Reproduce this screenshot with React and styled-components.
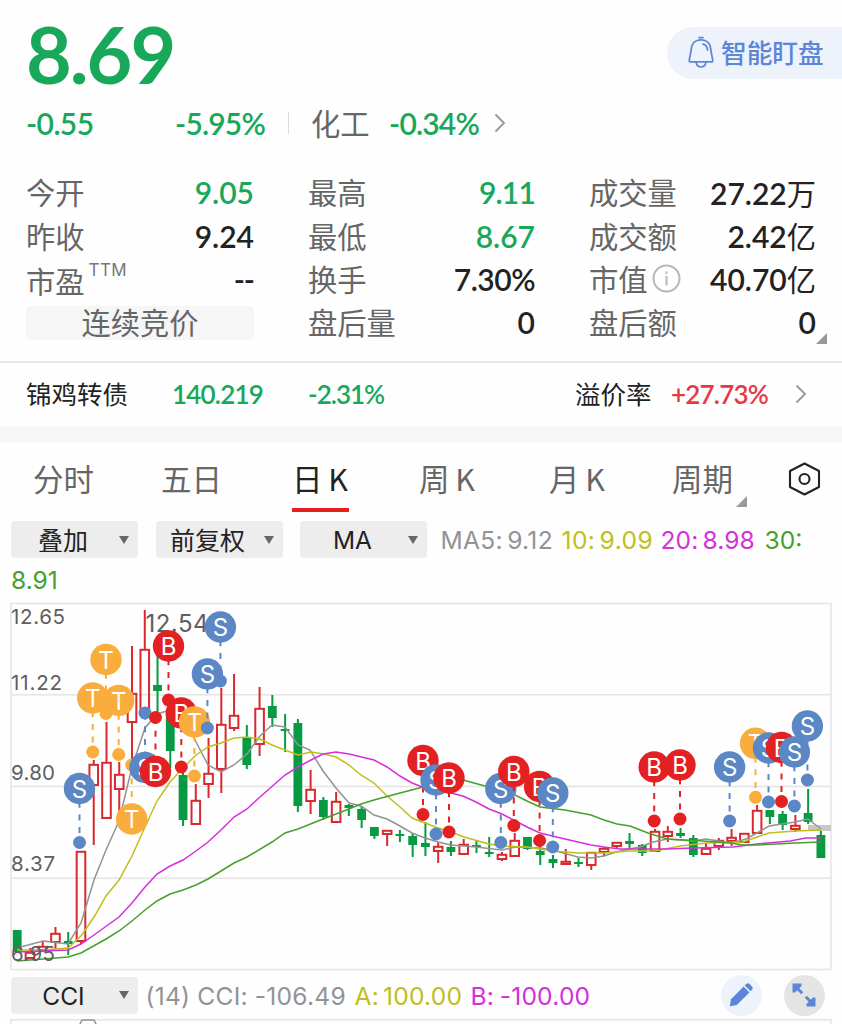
import React from 'react';
import styled, { createGlobalStyle } from 'styled-components';

const GREEN = '#18a85a';
const RED = '#e63946';
const YELLOW = '#bfbf1c';
const PINK = '#d62fdc';
const LEAF = '#45a02e';
const GRAY = '#929396';

const CJK = `"Noto Sans CJK SC", sans-serif`;
const DIN = `Lato, "Noto Sans CJK SC", sans-serif`;
const UI = `Inter, "Noto Sans CJK SC", sans-serif`;

const GlobalStyle = createGlobalStyle`
    * {
        box-sizing:border-box;
    }
    body {
        margin:0;
        background:#fefefe;
        overflow:hidden;
    }
`
const Page = styled.div`
    width:842px;
    height:1024px;
    overflow:hidden;
    background:#fefefe;
    color:#222;
    font-family:${CJK};
    white-space:nowrap;
`

/* ---------- quote header ---------- */
const Header = styled.header`
    display:flex;
    justify-content:space-between;
    height:102px;
    padding:7px 0 0 26px;
`
const Price = styled.div`
    font:700 79px/94px ${DIN};
    letter-spacing:-2px;
    color:${GREEN};
`
const WatchBtn = styled.button`
    display:flex;
    align-items:center;
    gap:7px;
    width:175px;
    height:52px;
    margin-top:20px;
    padding:0 0 2px 21px;
    border:0;
    border-radius:26px 0 0 26px;
    background:#edf2fb;
    color:#5b86d8;
    font:500 25.7px/50px ${CJK};
`
const Num = styled.span`
    font-family:${DIN};
    font-weight:600;
    font-size:${p => p.$size || 30}px;
    letter-spacing:${p => p.$ls || 0}px;
    color:${p => p.$color || '#222'};
    width:${p => p.$w ? p.$w + 'px' : 'auto'};
`
const Unit = styled.span`
    font-family:${CJK};
    font-weight:400;
    font-size:29.3px;
    letter-spacing:0;
`
const ChangeRow = styled.div`
    display:flex;
    align-items:center;
    height:42px;
    padding-left:26px;
`
const Divider = styled.i`
    width:1px;
    height:22px;
    margin:0 22px 0 0;
    background:#ddd;
`
const Sector = styled.span`
    width:78px;
    padding-bottom:3px;
    font-size:29.3px;
    color:#666;
`
const Stats = styled.section`
    display:grid;
    grid-template-columns:228px 227px 227px;
    grid-auto-rows:43.4px;
    column-gap:54px;
    height:219px;
    padding:27px 0 0 26px;
    border-bottom:2px solid #e8e8e8;
    position:relative;
`
const Stat = styled.div`
    display:flex;
    align-items:center;
    justify-content:space-between;
    line-height:43px;
`
const Label = styled.span`
    display:flex;
    align-items:center;
    padding-bottom:${p => p.$low ? 0 : 2}px;
    padding-top:${p => p.$low ? 3 : 0}px;
    font-size:29.3px;
    color:#666;
`
const Sup = styled.sup`
    margin:-22px 0 0 4px;
    font:400 17px/20px ${UI};
    letter-spacing:.4px;
    color:#777;
`
const Phase = styled.div`
    height:34px;
    margin-top:5px;
    border-radius:5px;
    background:#f6f6f6;
    text-align:center;
    font-size:29.3px;
    line-height:31px;
    color:#666;
`
const Corner = styled.i`
    position:absolute;
    right:${p => p.$right}px;
    bottom:${p => p.$bottom}px;
    border-left:11px solid transparent;
    border-bottom:11px solid #999;
`
const Bond = styled.section`
    display:flex;
    align-items:center;
    height:63px;
    padding:0 0 1px 26px;
    font-size:25.5px;
`
const BondName = styled.span`
    width:${p => p.$w}px;
    padding-bottom:3px;
`
const Gap = styled.div`
    height:17px;
    background:#f7f7f7;
`

/* ---------- tabs and indicators ---------- */
const Tabs = styled.nav`
    display:flex;
    height:78px;
    padding-left:33px;
`
const Tab = styled.a`
    position:relative;
    width:${p => p.$w}px;
    font-size:30.5px;
    line-height:71px;
    word-spacing:-1px;
    color:${p => p.$active ? '#222' : '#666'};
    &::after {
        content:'';
        display:${p => p.$active ? 'block' : 'none'};
        width:57px;
        height:4px;
        margin-top:-6px;
        margin-left:-.5px;
        background:#e91f1f;
    }
`
const Settings = styled.span`
    padding-top:18px;
`
const Tools = styled.div`
    display:flex;
    align-items:center;
    height:37px;
    padding-left:11px;
`
const Select = styled.button`
    display:flex;
    align-items:center;
    width:127px;
    height:37px;
    margin-right:${p => p.$mr || 17.5}px;
    padding:0 9px 0 0;
    border:0;
    border-radius:4px;
    background:#ededed;
    color:#222;
    font:400 ${p => p.$latin ? 24.5 : 25}px/37px ${p => p.$latin ? UI : CJK};
    span {
        flex:1;
        padding:${p => p.$latin ? '2px 3px 0 0' : '0 4px 0 0'};
        text-align:center;
    }
    &::after {
        content:'';
        border:5.5px solid transparent;
        border-top:8px solid #666;
        border-bottom:0;
    }
`
const Ind = styled.span`
    width:${p => p.$w}px;
    padding-top:2px;
    font:400 24.6px/37px ${UI};
    letter-spacing:${p => p.$ls || 0}px;
    word-spacing:${p => p.$ws || -3}px;
    color:${p => p.$color};
`
const Wrapped = styled.div`
    height:44px;
    padding:4px 0 0 11px;
`
const ChartSvg = styled.svg`
    display:block;
`
const RoundBtn = styled.button`
    display:flex;
    align-items:center;
    justify-content:center;
    width:41px;
    height:41px;
    margin-left:${p => p.$ml}px;
    padding:0;
    border:0;
    border-radius:50%;
    background:${p => p.$bg};
`
const Footer = styled.div`
    display:flex;
    align-items:center;
    height:48px;
    padding-left:11px;
`
const InfoSvg = styled.svg`
    margin-left:4px;
`

function BellIcon() {
    return (
        <svg width="26" height="33" viewBox="0 0 26 33" fill="none" stroke="#5b86d8" strokeWidth="1.7" strokeLinecap="round" strokeLinejoin="round">
            <path d="M11 1.6h4M3.2 14C3.4 7.5 7.4 3.8 13 3.8S22.6 7.5 22.8 14l1.9 10c.2 1.3-.2 1.9-1.3 1.9H2.6c-1.1 0-1.5-.6-1.3-1.9z" />
            <path d="M8 26c.5 3 2.2 5 5 5s4.500-2 5-5M15 8.200c2.500.5 4.300 2.600 4.500 6" />
        </svg>
    );
}
function Chevron() {
    return (
        <svg width="12" height="20" viewBox="0 0 12 20" fill="none" stroke="#999" strokeWidth="1.9">
            <path d="M1.5 1.5 10 10l-8.5 8.5" />
        </svg>
    );
}
function InfoIcon() {
    return (
        <InfoSvg width="29" height="29" viewBox="0 0 29 29" fill="none" stroke="#b8b8b8" strokeWidth="2">
            <circle cx="14.5" cy="14.5" r="13" />
            <path d="M14.5 12v9.5M14.5 7.5V10" />
        </InfoSvg>
    );
}
function HexIcon() {
    return (
        <svg width="34" height="36" viewBox="0 0 34 36" fill="none" stroke="#222" strokeWidth="2.1" strokeLinejoin="round">
            <path d="M17.500 2.500 32 10v16L17.500 33.500 3 26V10z" />
            <circle cx="17.5" cy="18" r="5" />
        </svg>
    );
}
function PencilIcon() {
    return (
        <svg width="24" height="24" viewBox="0 0 24 24" fill="#5b86d8">
            <path d="M.8 23.200l1.200-7L14.600 3.600l5.800 5.800L7.800 22z" />
            <path d="M15.700 2.500l1.500-1.500c1-1 2.500-.9 3.400 0l2.400 2.400c.9.9 1 2.400 0 3.400l-1.500 1.500z" />
        </svg>
    );
}
function ExpandIcon() {
    return (
        <svg width="24" height="24" viewBox="0 0 24 24" fill="#5b86d8" stroke="#5b86d8">
            <path d="M.5.500H9.500V3L3 9.500H.5zM23.500 23.500H14.500V21L21 14.500h2.500z" stroke="none" />
            <path d="M3 3l7.200 7.200M13.800 13.800 21 21" strokeWidth="3" />
        </svg>
    );
}

/* ---------- k-line data, in chart pixels ---------- */
// [up, bodyTop, bodyBottom, wickTop, wickBottom]
const candles = [
    [0, 930, 952, 930, 952], [1, 952, 958, 948, 959], [1, 946, 950, 941, 952], [1, 933, 942, 927, 949],
    [0, 941, 944, 932, 955], [1, 851, 941, 851, 944], [1, 764, 785, 760, 845], [1, 762, 818, 722, 818],
    [1, 774, 789, 762, 813], [1, 693, 722, 646, 767], [1, 649, 711, 610, 711], [0, 685, 691, 655, 712],
    [0, 710, 751, 700, 768], [0, 775, 820, 770, 826], [1, 800, 824, 784, 824], [1, 773, 784, 738, 798],
    [1, 724, 769, 688, 793], [1, 715, 728, 674, 731], [0, 738, 765, 725, 769], [1, 708, 744, 687, 756],
    [0, 706, 718, 695, 727], [0, 729, 731, 714, 752], [0, 723, 806, 719, 812], [1, 789, 801, 770, 814],
    [0, 800, 817, 797, 820], [1, 801, 822, 792, 822], [0, 805, 808, 804, 816], [0, 809, 820, 806, 828],
    [0, 827, 836, 827, 839], [1, 830, 834, 830, 846], [0, 834, 836, 830, 842], [0, 836, 845, 833, 857],
    [0, 843, 847, 822, 856], [1, 846, 851, 842, 863], [0, 847, 852, 841, 856], [1, 844, 854, 839, 854],
    [0, 845, 847, 840, 853], [0, 852, 854, 837, 857], [1, 854, 859, 852, 861], [1, 840, 856, 833, 856],
    [0, 837, 849, 837, 850], [0, 851, 855, 845, 865], [0, 859, 863, 855, 868], [1, 861, 864, 849, 864],
    [0, 862, 864, 858, 867], [1, 852, 865, 852, 870], [1, 848, 852, 847, 856], [1, 842, 846, 842, 849],
    [0, 841, 844, 833, 848], [0, 845, 853, 844, 856], [1, 831, 851, 829, 851], [1, 831, 836, 826, 842],
    [0, 833, 836, 828, 838], [0, 838, 855, 835, 857], [1, 848, 854, 843, 854], [1, 840, 846, 838, 850],
    [1, 837, 841, 829, 846], [1, 833, 842, 833, 842], [1, 810, 833, 805, 833], [0, 810, 817, 810, 824],
    [0, 814, 825, 811, 830], [1, 825, 829, 815, 832], [0, 813, 822, 789, 824], [0, 835, 858, 831, 858],
];
const averages = [
    ['#929396', '17,948 43,941 68,944 81,923 94,880 106,850 119,821 132,767 145,728 157,714 170,710 183,714 194,738 208,765 221,772 234,765 247,754 260,736 272,725 285,727 298,745 310,750 323,771 336,788 349,803 361,806 374,815 387,819 400,826 412,833 425,838 438,842 451,845 476,847 502,850 515,847 540,848 553,850 563,853 578,857 591,858 604,856 616,852 629,849 640,847 653,842 667,839 692,841 706,839 718,841 731,843 746,839 757,833 769,826 795,822 808,819 821,829'],
    ['#bfbf1c', '17,950 43,950 68,948 81,936 94,917 106,896 119,880 132,856 145,827 157,801 170,782 183,768 196,755 208,747 221,743 234,738 247,737 260,739 272,745 285,750 298,755 311,752 324,754 336,757 349,765 361,775 374,783 387,796 400,807 412,818 425,823 438,828 451,832 464,837 489,844 502,846 527,847 553,851 578,853 604,853 629,851 655,851 680,846 706,843 743,842 757,837 769,833 795,831 821,830'],
    ['#d62fdc', '17,952 43,951 68,950 81,944 94,935 119,917 132,903 145,887 157,874 170,866 183,860 196,851 208,842 221,830 234,817 247,809 260,797 285,775 298,767 311,760 323,754 336,752 349,754 374,760 387,767 400,776 412,783 425,788 451,793 463,796 476,802 489,809 502,814 527,827 540,833 565,839 591,845 604,847 620,849 667,849 693,848 733,847 757,844 790,841 806,838 821,838'],
    ['#45a02e', '17,961 43,959 68,957 81,953 106,939 119,931 132,921 145,910 157,901 170,894 183,890 196,885 208,879 221,871 234,863 247,857 272,842 285,833 298,829 323,819 349,809 361,804 374,800 400,793 423,787 438,779 451,778 463,780 485,786 513,794 527,801 540,807 565,810 591,815 604,820 617,824 630,826 648,833 667,839 703,841 730,843 743,845 757,845 795,843 821,842'],
];
// [type, x, badge y, dot y]
const marks = [
    ['S', 79.5, 788.5, 842.5], ['T', 92.7, 698, 752], ['T', 106, 659.5, 713.5], ['T', 118.7, 700.5, 754.5],
    ['T', 131.7, 819, 765], ['S', 145, 767.5, 713], ['B', 155.5, 771.5, 717.5], ['B', 168.5, 646, 700],
    ['B', 181.3, 713, 767], ['T', 194.4, 722, 776], ['S', 207.4, 674, 728], ['S', 220.4, 627, 681],
    ['B', 423, 760.5, 814.5], ['S', 436, 780, 834], ['B', 449, 778, 832], ['S', 500.8, 788.5, 842.5],
    ['B', 513.8, 771.5, 825.5], ['B', 539.6, 786.5, 840.5], ['S', 552.8, 793, 847], ['B', 654.2, 767, 821],
    ['B', 680, 765, 819], ['S', 729.6, 767, 821], ['T', 755.5, 743.3, 797.3], ['S', 768.5, 748, 802],
    ['B', 781.5, 747.5, 801.5], ['S', 794.4, 752, 806], ['S', 807.4, 726, 780],
];
const markColor = { S: '#5b87c5', T: '#f9ad3d', B: '#e32022' };
const grid = [694.7, 786.5, 878.3];
const axis = [['12.65', 623.5], ['11.22', 689.5], ['9.80', 780], ['8.37', 870.5], ['6.95', 961]];

function Candle({ i, data }) {
    const [up, top, bottom, high, low] = data;
    const x = 17.2 + i * 12.757;
    const color = up ? '#d9292e' : '#069b43';
    if (!up) {
        return (
            <g fill={color}>
                <rect x={x - 1} y={high} width="2" height={low - high} />
                <rect x={x - 4.4} y={top} width="8.8" height={bottom - top} />
            </g>
        );
    }
    return (
        <g fill="none" stroke={color} strokeWidth="2">
            <path d={`M${x} ${high}V${top}M${x} ${bottom}V${low}`} />
            <rect x={x - 4.3} y={top + .8} width="8.6" height={Math.max(bottom - top - .8, 2)} />
        </g>
    );
}

function Mark({ type, x, y, dot }) {
    const color = markColor[type];
    return (
        <g>
            <path d={`M${x} ${Math.min(y, dot) + .5}V${Math.max(y, dot)}`} stroke={color} strokeWidth="2" strokeDasharray="6 6.7" />
            <circle cx={x} cy={dot} r="6.5" fill={color} />
            <circle cx={x} cy={y} r="15.7" fill={color} />
            <text x={x} y={y + 9} fill="#fff" fontSize="24" textAnchor="middle">{type}</text>
        </g>
    );
}

function KLine() {
    return (
        <ChartSvg width="842" height="369" viewBox="0 602 842 369" fontFamily="Inter, sans-serif">
            <path d={`M11 603.5H831V969.5H11z${grid.map(y => `M11 ${y}H831`).join('')}`} fill="none" stroke="#e4e4e4" strokeWidth="1.5" />
            <rect x="808" y="825" width="23" height="6" fill="#c8c8c8" />
            {candles.map((c, i) => <Candle key={i} i={i} data={c} />)}
            {averages.map(([color, points]) => (
                <polyline key={color} points={points} fill="none" stroke={color} strokeWidth="1.5" />
            ))}
            {axis.map(([label, y]) => (
                <text key={label} x="11" y={y} fontSize="20.5" fill="#5f5f5f" textLength={label === '11.22' ? 51 : label.length > 4 ? 54 : 44}>{label}</text>
            ))}
            <text x="145.5" y="632" fontSize="24" fill="#5f5f5f" textLength="63">12.54</text>
            {marks.map(([type, x, y, dot]) => <Mark key={x} type={type} x={x} y={y} dot={dot} />)}
        </ChartSvg>
    );
}

function App() {
    return (
        <Page>
            <GlobalStyle />
            <Header>
                <Price>8.69</Price>
                <WatchBtn><BellIcon />智能盯盘</WatchBtn>
            </Header>
            <ChangeRow>
                <Num $color={GREEN} $ls={-.6} $w={149}>-0.55</Num>
                <Num $color={GREEN} $ls={-.8} $w={113}>-5.95%</Num>
                <Divider />
                <Sector>化工</Sector>
                <Num $color={GREEN} $ls={-.8} $w={105}>-0.34%</Num>
                <Chevron />
            </ChangeRow>
            <Stats>
                <Stat><Label>今开</Label><Num $color={GREEN}>9.05</Num></Stat>
                <Stat><Label>最高</Label><Num $color={GREEN} $ls={-.8}>9.11</Num></Stat>
                <Stat><Label>成交量</Label><Num>27.22<Unit>万</Unit></Num></Stat>
                <Stat><Label>昨收</Label><Num>9.24</Num></Stat>
                <Stat><Label>最低</Label><Num $color={GREEN}>8.67</Num></Stat>
                <Stat><Label>成交额</Label><Num>2.42<Unit>亿</Unit></Num></Stat>
                <Stat><Label $low>市盈<Sup>TTM</Sup></Label><Num $ls={-1}>--</Num></Stat>
                <Stat><Label>换手</Label><Num $ls={-.5}>7.30%</Num></Stat>
                <Stat><Label>市值<InfoIcon /></Label><Num>40.70<Unit>亿</Unit></Num></Stat>
                <Phase>连续竞价</Phase>
                <Stat><Label>盘后量</Label><Num>0</Num></Stat>
                <Stat><Label>盘后额</Label><Num>0</Num></Stat>
                <Corner $right={15} $bottom={17} />
            </Stats>
            <Bond>
                <BondName $w={146}>锦鸡转债</BondName>
                <Num $color={GREEN} $size={26} $ls={-.8} $w={136}>140.219</Num>
                <Num $color={GREEN} $size={26} $ls={-1} $w={267}>-2.31%</Num>
                <BondName $w={96}>溢价率</BondName>
                <Num $color={RED} $size={26} $ls={-.8} $w={124}>+27.73%</Num>
                <Chevron />
            </Bond>
            <Gap />
            <Tabs>
                <Tab $w={128}>分时</Tab>
                <Tab $w={131}>五日</Tab>
                <Tab $w={127} $active>日 K</Tab>
                <Tab $w={130}>周 K</Tab>
                <Tab $w={123}>月 K</Tab>
                <Tab $w={115}>周期<Corner $right={40} $bottom={14} /></Tab>
                <Settings><HexIcon /></Settings>
            </Tabs>
            <Tools>
                <Select><span>叠加</span></Select>
                <Select><span>前复权</span></Select>
                <Select $latin $mr={13.5}><span>MA</span></Select>
                <Ind $w={121} $ls={.3} $color={GRAY}>MA5: 9.12</Ind>
                <Ind $w={99} $ls={.4} $color={YELLOW}>10: 9.09</Ind>
                <Ind $w={104} $ls={.1} $color={PINK}>20: 8.98</Ind>
                <Ind $w={50} $color={LEAF}>30:</Ind>
            </Tools>
            <Wrapped><Ind $color={LEAF}>8.91</Ind></Wrapped>
            <KLine />
            <Footer>
                <Select $latin $mr={7.5}><span>CCI</span></Select>
                <Ind $w={209} $ls={.25} $ws={-.3} $color={GRAY}>(14) CCI: -106.49</Ind>
                <Ind $w={116} $ls={.2} $color={YELLOW}>A: 100.00</Ind>
                <Ind $w={122} $ls={.2} $ws={-1.5} $color={PINK}>B: -100.00</Ind>
                <RoundBtn $ml={128} $bg="#edf2fb"><PencilIcon /></RoundBtn>
                <RoundBtn $ml={22} $bg="#e4e4e4"><ExpandIcon /></RoundBtn>
            </Footer>
            <ChartSvg width="842" height="6" viewBox="0 1019 842 6" fill="none">
                <path d="M11 1030V1019.8H831V1030" stroke="#e4e4e4" strokeWidth="1.5" />
                <path d="M79 1026 82 1020H94L97 1026" stroke="#929396" strokeWidth="1.5" />
            </ChartSvg>
        </Page>
    );
}

export default App;
